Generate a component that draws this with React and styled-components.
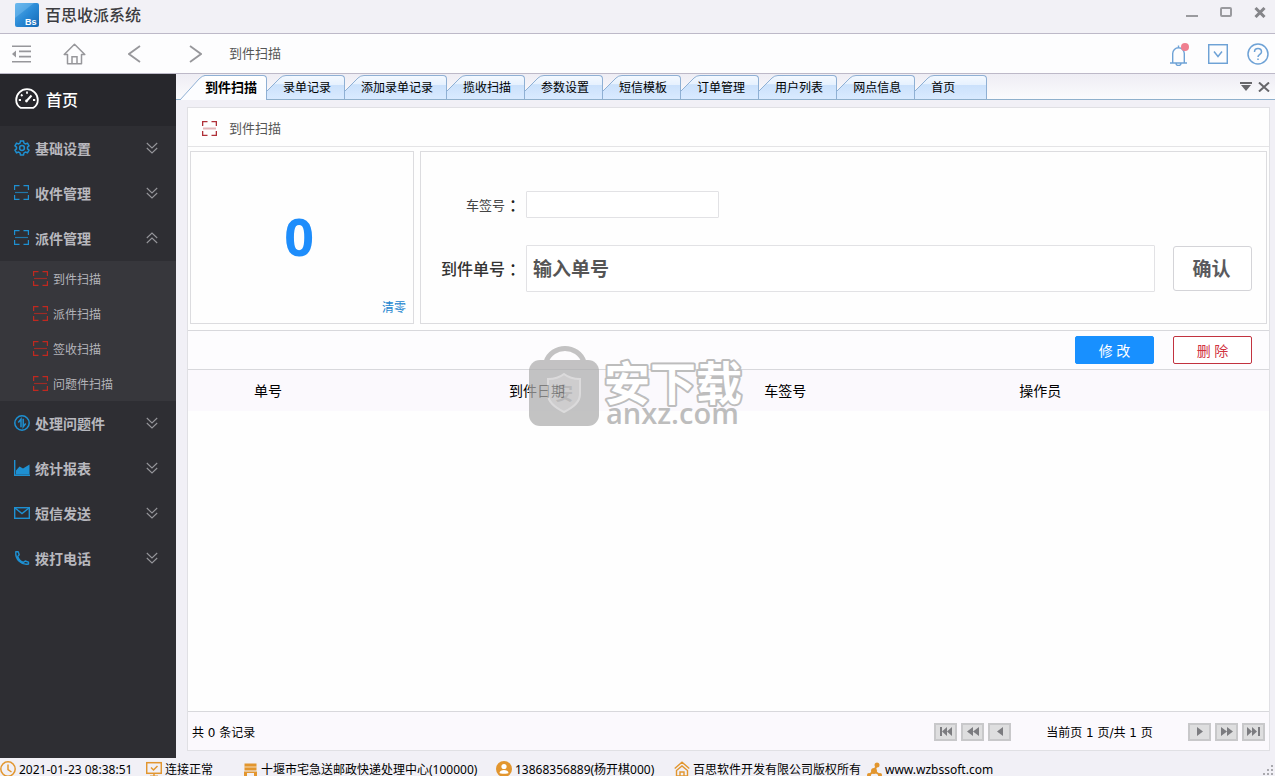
import React, { useState } from "react";
import styled, { createGlobalStyle, css } from "styled-components";

const GlobalStyle = createGlobalStyle`
  * {
    box-sizing: border-box;
  }
  body {
    margin: 0;
    font-family: "Noto Sans", "Noto Sans CJK SC", sans-serif;
    font-size: 12px;
    color: #000;
  }
  button, input {
    font-family: inherit;
    margin: 0;
  }
  button {
    padding: 0;
    border: none;
    background: none;
    cursor: pointer;
  }
  svg {
    display: block;
    flex: none;
  }
`;

const Window = styled.div`
  display: grid;
  grid-template-rows: 34px 40px 1fr 18px;
  height: 100vh;
  min-height: 600px;
  background: #f1f0f6;
`;

const TitleBar = styled.header`
  display: flex;
  align-items: center;
  gap: 6px;
  padding: 0 7px 4px 15px;
  border-bottom: 1px solid #bdb9c8;
  background: #f2f1f6;
`;

const AppName = styled.h1`
  flex: 1;
  margin: 0;
  font-size: 16px;
  line-height: 24px;
  font-weight: 500;
  color: #3c3c40;
`;

const WindowButton = styled.button`
  display: flex;
  justify-content: center;
  width: 16px;
  margin-left: 12px;
  padding-bottom: 4px;
`;

const Toolbar = styled.nav`
  display: flex;
  align-items: center;
  justify-content: space-between;
  padding: 0 6px 0 11px;
  border-bottom: 1px solid #bdb9c8;
  background: #fdfdfe;
`;

const ToolGroup = styled.div`
  display: flex;
  align-items: center;
  gap: ${(p) => p.$gap}px;
`;

const ToolTitle = styled.span`
  margin-left: -15px;
  padding-bottom: 2px;
  font-size: 13px;
  line-height: 18px;
  color: #555;
`;

const Body = styled.div`
  display: grid;
  grid-template-columns: 176px 1fr;
  min-height: 0;
`;

const Sidebar = styled.aside`
  background: #2e2e33;
  overflow: hidden;
`;

const HomeButton = styled.button`
  display: flex;
  align-items: center;
  gap: 7px;
  width: 100%;
  height: 52px;
  padding: 0 0 2px 15px;
  background: #27272c;
  color: #fff;
  font-size: 16px;
  font-weight: 500;
`;

const MenuButton = styled.button`
  display: flex;
  align-items: center;
  gap: 5px;
  width: 100%;
  height: 45px;
  padding: 0 18px 2px 14px;
  color: #b8b8be;
  font-size: 14px;
  font-weight: 700;
  text-align: left;

  span {
    flex: 1;
  }
`;

const MenuIcon = styled.i`
  display: flex;
  width: 16px;
`;

const SubMenu = styled.div`
  background: #37373c;
`;

const SubButton = styled.button`
  display: flex;
  align-items: center;
  gap: 5px;
  width: 100%;
  height: 35px;
  padding-left: 33px;
  color: #b4b4ba;
  font-size: 12px;
`;

const Main = styled.main`
  display: flex;
  flex-direction: column;
  min-width: 0;
`;

const TabStrip = styled.div`
  display: flex;
  height: 26px;
  padding: 1px 5px 0 4px;
  border-bottom: 1px solid #8fb0cc;
  background: linear-gradient(#eeedf4, #fbfbfd);
`;

const TabButton = styled.button`
  position: relative;
  height: ${(p) => (p.$active ? 25 : 24)}px;
  padding: 1px ${(p) => (p.$last ? 32 : 14)}px 0 16px;
  font-size: 12px;
  line-height: 24px;
  white-space: nowrap;
  color: #000;

  svg {
    position: absolute;
    left: 0;
    top: 0;
  }

  span {
    position: relative;
  }

  &::before {
    content: "";
    position: absolute;
    left: 24px;
    right: 0;
    top: 0;
    bottom: 0;
    border: 1px solid #8fb0d4;
    border-width: 1px 1px 0 0;
    border-radius: 0 4px 0 0;
    background: linear-gradient(#f4f9ff 0%, #e6f1fe 38%, #cbe1fb 40%, #d9eaff 100%);
  }

  ${(p) =>
    p.$active &&
    css`
      padding: 0 10px 1px 25px;
      font-size: 13px;
      font-weight: 700;

      &::before {
        background: linear-gradient(#fff, #f8fbff);
      }
    `}
`;

const TabTools = styled.div`
  display: flex;
  align-items: center;
  gap: 6px;
  margin-left: auto;
`;

const Panel = styled.section`
  flex: 1;
  display: flex;
  flex-direction: column;
  min-height: 0;
  margin: 7px 5px 7px 11px;
  border: 1px solid #e0e0e4;
  background: #fefefe;
`;

const PanelHeader = styled.div`
  display: flex;
  align-items: center;
  gap: 12px;
  height: 39px;
  padding: 2px 14px 0;
  border-bottom: 1px solid #e4e4e6;

  h2 {
    margin: 0;
    font-size: 13px;
    line-height: 18px;
    font-weight: 400;
    color: #555;
  }
`;

const Cards = styled.div`
  display: grid;
  grid-template-columns: 224px 1fr;
  gap: 6px;
  height: 183px;
  padding: 4px 2px 6px;
`;

const Counter = styled.div`
  display: grid;
  grid-template-rows: 1fr 32px;
  padding-top: 28px;
  border: 1px solid #dcdcdf;
`;

const Count = styled.output`
  display: flex;
  align-items: center;
  justify-content: center;
  padding-right: 6px;
  font-family: "Open Sans", sans-serif;
  font-size: 52px;
  line-height: 60px;
  font-weight: 700;
  color: #1e8dfb;
`;

const ClearButton = styled.button`
  justify-self: end;
  padding-right: 7px;
  font-size: 12px;
  color: #1c86cf;
`;

const Form = styled.form`
  display: grid;
  grid-template-columns: 82px 1fr 79px;
  grid-template-rows: 27px 47px;
  gap: 27px 0;
  align-content: start;
  align-items: center;
  padding: 39px 14px 0 19px;
  border: 1px solid #dcdcdf;
`;

const Label = styled.label`
  display: flex;
  align-items: center;
  justify-content: flex-end;
  padding-right: 1px;
  white-space: nowrap;
  line-height: 24px;
  font-size: ${(p) => (p.$large ? 16 : 13)}px;
  font-weight: ${(p) => (p.$large ? 500 : 400)};
  color: ${(p) => (p.$large ? "#333" : "#444")};
`;

const Colon = styled.span`
  font-family: "Noto Sans CJK TC", sans-serif;
  font-size: 16px;
  font-weight: 500;
  color: #222;
`;

const Field = styled.div`
  padding: 0 18px 0 4px;
  height: 100%;
`;

const TextInput = styled.input`
  width: ${(p) => (p.$large ? "100%" : "193px")};
  height: 100%;
  padding: 0 6px;
  border: 1px solid #e2e2e5;
  border-radius: 1px;
  background: #fff;
  outline: none;
  font-size: ${(p) => (p.$large ? 19 : 13)}px;
  font-weight: ${(p) => (p.$large ? 700 : 400)};
  color: #555;

  &::placeholder {
    color: #555;
    opacity: 1;
  }
`;

const ConfirmButton = styled.button`
  height: 45px;
  padding: 0 2px 2px 0;
  border: 1px solid #d4d4d8;
  border-radius: 3px;
  background: #fff;
  font-size: 19px;
  font-weight: 700;
  color: #5a5a5e;
`;

const Records = styled.div`
  position: relative;
  flex: 1;
  display: flex;
  flex-direction: column;
  border-top: 1px solid #d8d8dc;
`;

const Actions = styled.div`
  display: flex;
  align-items: center;
  justify-content: flex-end;
  gap: 19px;
  height: 39px;
  padding-right: 17px;
  border-bottom: 1px solid #d8d8dc;
  background: #fdfcfe;
`;

const ActionButton = styled.button`
  width: 79px;
  height: 28px;
  border: 1px solid ${(p) => (p.$danger ? "#c2323f" : "#1890ff")};
  border-radius: 2px;
  background: ${(p) => (p.$danger ? "#fff" : "#1890ff")};
  color: ${(p) => (p.$danger ? "#d0323f" : "#fff")};
  font-size: 14px;
`;

const Table = styled.table`
  width: 100%;
  table-layout: fixed;
  border-collapse: collapse;

  th {
    height: 41px;
    padding: 0 0 1px;
    background: #fbf9fd;
    font-size: 14px;
    font-weight: 400;
    text-align: left;
  }
  th:first-child {
    width: 29.7%;
    padding-left: 66px;
  }
  th:nth-child(2), th:nth-child(3) {
    width: 23.6%;
  }
`;

const Pager = styled.footer`
  display: flex;
  align-items: center;
  gap: 4px;
  height: 39px;
  margin-top: auto;
  padding: 1px 4px 0;
  border-top: 1px solid #d8d8dc;
  background: #fbf9fd;
  font-family: "DejaVu Sans", "Noto Sans CJK SC", sans-serif;
  font-size: 12px;
`;

const Total = styled.span`
  margin-right: auto;
`;

const PageInfo = styled.span`
  width: 169px;
  text-align: center;
`;

const PageButton = styled.button`
  display: flex;
  align-items: center;
  justify-content: center;
  width: 23px;
  height: 18px;
  border: 2px solid #c8c8ca;
  background: #dededf;
`;

const Watermark = styled.svg`
  position: absolute;
  left: 339px;
  top: 12px;
  overflow: visible;
  pointer-events: none;
`;

const StatusBar = styled.footer`
  position: relative;
  display: flex;
  padding-top: 3px;
  overflow: hidden;
  background: #f1f0f6;
`;

const StatusItem = styled.div`
  flex: none;
  display: flex;
  align-items: center;
  gap: 3px;
  width: ${(p) => p.$width}px;
  height: 16px;
  line-height: 15px;
  white-space: nowrap;
`;

const Grip = styled.svg`
  position: absolute;
  right: 0;
  bottom: 0;
`;

/* ---------- icons ---------- */

const Svg = ({ w = 16, h = w, box, color, sw = 1, children }) => (
  <svg
    width={w}
    height={h}
    viewBox={box || `0 0 ${w} ${h}`}
    fill="none"
    stroke={color}
    strokeWidth={sw}
    aria-hidden="true"
  >
    {children}
  </svg>
);

const LogoIcon = () => (
  <svg width="24" height="24" viewBox="0 0 24 24" aria-hidden="true">
    <defs>
      <linearGradient id="logo" x1="0" y1="0" x2="1" y2="1">
        <stop offset="0" stopColor="#5cb0ea" />
        <stop offset="0.5" stopColor="#2a8ad6" />
        <stop offset="1" stopColor="#1568b4" />
      </linearGradient>
    </defs>
    <rect width="24" height="24" rx="2" fill="url(#logo)" />
    <path d="M0 2Q0 0 2 0H19L0 15Z" fill="#8cccf5" opacity="0.35" />
    <text x="10" y="22" fontFamily="Liberation Sans, sans-serif" fontSize="9" fontWeight="700" fill="#fff">
      Bs
    </text>
  </svg>
);

const ScanIcon = ({ color, soft }) => (
  <Svg w={15} color={color} sw={soft ? 1.400 : 1.200}>
    <path d="M.6 5V.6H5.500M9.500 .6h4.900v4.400M14.400 10v4.400H9.500M5.500 14.400H.6V10" />
    <path d="M1 7.500h13" strokeWidth={soft ? 2 : 1.200} opacity={soft ? 0.35 : 0.75} />
  </Svg>
);

const GearIcon = () => (
  <Svg w={16} color="#1e90d2" sw={1.500}>
    <path d="M6.500 1h3l.5 2.100 1.400.8 2.100-.7 1.500 2.600L13.500 7.200v1.600l1.500 1.400-1.500 2.600-2.100-.7-1.400.8-.5 2.100h-3L6 12.900l-1.400-.8-2.100.7L1 10.200l1.500-1.400V7.200L1 5.800l1.500-2.600 2.100.7L6 3.100Z" />
    <circle cx="8" cy="8" r="2.400" />
  </Svg>
);

const ExchangeIcon = () => (
  <Svg w={16} color="#1e90d2" sw={1.500}>
    <circle cx="8" cy="8" r="7.200" />
    <path d="M7 12.300V4.200L4.300 7.500M9.200 3.800v8l2.500-3.300" />
  </Svg>
);

const ChartIcon = () => (
  <Svg w={16} color="#1e90d2">
    <path d="M.7 0v15.300H16" strokeWidth="1.400" />
    <path d="M2 14.500V10.500L5.500 6.500 9 8.500 15.500 4.500V14.500Z" fill="#1e90d2" stroke="none" />
  </Svg>
);

const MailIcon = () => (
  <Svg w={16} h={12} color="#1e90d2" sw={1.400}>
    <rect x=".7" y=".7" width="14.600" height="10.600" />
    <path d="M1 1l7 5.500L15 1" />
  </Svg>
);

const PhoneIcon = () => (
  <Svg w={16} color="#1e90d2" sw={1.400}>
    <path d="M1.800 1.800h2.400l1 3-1.500 1.600c1 3 3 5 5.800 6l1.700-1.400 3.300 1.200v1.800C7.500 15.500 1 9.500 1.800 1.800Z" strokeLinejoin="round" />
    <path d="M3.200 7c1.200 3 3.300 5 6.300 6.200" strokeWidth="1.800" />
  </Svg>
);

const GaugeIcon = () => (
  <Svg w={24} h={22} color="#fff" sw={1.800}>
    <path d="M5.500 19.800C2.800 18 1.200 15.200 1.200 12A10.700 10.700 0 0 1 22.800 12c0 3.200-1.600 6-4.300 7.800Z" strokeLinejoin="round" />
    <path d="M12 12.500L16.500 7.500" strokeWidth="2" />
    <path d="M12 3.500v2.200M3.800 12H6M18 12h2.200M6 6.500l1.500 1.500M12 12.800h.1" />
    <circle cx="11.500" cy="13" r="1.400" fill="#fff" stroke="none" />
  </Svg>
);

const ChevronIcon = ({ up }) => (
  <Svg w={12} h={12} color="#96969b" sw={1.100}>
    <path d={up ? "M.8 6L6 1l5.200 5M.8 11L6 6l5.200 5" : "M.8 1L6 6l5.200-5M.8 6L6 11l5.200-5"} />
  </Svg>
);

const IndentIcon = () => (
  <Svg w={21} h={18} color="#97979b" sw={1.600}>
    <path d="M1 1.200h19M8 6.400h12M8 11.600h12M1 16.800h19" />
    <path d="M5 5.500v7L1 9Z" fill="#97979b" stroke="none" />
  </Svg>
);

const HouseIcon = () => (
  <Svg w={23} h={22} color="#97979b" sw={1.500}>
    <path d="M4.500 11.500H1.200L11.500 1.200l10.300 10.300h-3.300v9.300h-14Z" strokeLinejoin="round" />
    <path d="M9 20.800v-7h5v7" />
  </Svg>
);

const ArrowIcon = ({ right }) => (
  <Svg w={13} h={18} color="#97979b" sw={1.800}>
    <path d={right ? "M1 1l11 8L1 17" : "M12 1L1 9l11 8"} />
  </Svg>
);

const BellIcon = () => (
  <Svg w={20} h={24} color="#6ea2d6" sw={1.400}>
    <path d="M1 21h17M3.700 21v-9.500a5.800 5.800 0 0 1 11.600 0V21M9.500 3.500v2M7 21.300a2.500 2.200 0 0 0 5 0" />
    <circle cx="16" cy="5" r="4" fill="#ef7f8f" stroke="none" />
  </Svg>
);

const BoxIcon = () => (
  <Svg w={20} color="#6ea2d6" sw={1.500}>
    <rect x=".7" y=".7" width="18.600" height="18.600" />
    <path d="M6 7.500l4 5 4-5" />
  </Svg>
);

const HelpIcon = () => (
  <Svg w={22} color="#6ea2d6" sw={1.500}>
    <circle cx="11" cy="11" r="10" />
    <path d="M7.500 9c0-4.600 7-4.600 7 0 0 2.300-3.500 2.300-3.500 5M11 15.500v1.500" />
  </Svg>
);

const pageShapes = {
  first: "M2 1h2v9H2zM9 1v9L4 5.500zM14 1v9L9 5.500z",
  rewind: "M8 1v9L2 5.500zM14 1v9L8 5.500z",
  prev: "M11 1v9L5 5.500z",
  next: "M5 1v9l6-4.500z",
  forward: "M2 1v9l6-4.500zM8 1v9l6-4.500z",
  last: "M1 1v9l5-4.500zM6 1v9l5-4.500zM12 1h2v9h-2z",
};

const TabEdge = ({ active }) => (
  <svg width="25" height="25" viewBox="0 0 25 25" aria-hidden="true">
    <defs>
      <linearGradient id="tabFill" gradientUnits="userSpaceOnUse" x1="0" y1="0" x2="0" y2="24">
        <stop offset="0" stopColor="#f4f9ff" />
        <stop offset="0.380" stopColor="#e6f1fe" />
        <stop offset="0.400" stopColor="#cbe1fb" />
        <stop offset="1" stopColor="#d9eaff" />
      </linearGradient>
    </defs>
    {active ? (
      <>
        <path d="M0 25L19 4Q22.500.5 25 .5V25Z" fill="#fcfdff" />
        <path d="M0 25L19 4Q22.500.5 25 .5" fill="none" stroke="#8fb0d4" />
      </>
    ) : (
      <>
        <path d="M0 24V16L13 3Q15.500.5 19 .5H25V24Z" fill="url(#tabFill)" />
        <path d="M0 16L13 3Q15.500.5 19 .5H25" fill="none" stroke="#8fb0d4" />
      </>
    )}
  </svg>
);

const ORANGE = "#e2962f";

const ClockIcon = () => (
  <Svg w={16} color={ORANGE} sw={1.500}>
    <circle cx="8" cy="8" r="7.200" />
    <path d="M8 3.500V8.500l3.500 2.500" />
  </Svg>
);

const MonitorIcon = () => (
  <Svg w={16} color={ORANGE} sw={1.500}>
    <rect x=".7" y="1.700" width="14.600" height="10.600" />
    <path d="M5 6.500l2.500 2.500 4-4M4 15.300h8M8 12v3" />
  </Svg>
);

const StoreIcon = () => (
  <Svg w={15} color="none">
    <path d="M1.500 1.500h12v7H1.500zM1 9.500h13V14h-3v-3H4v3H1z" fill={ORANGE} />
    <path d="M1 5h13" stroke="#f6dcb8" />
  </Svg>
);

const UserIcon = () => (
  <Svg w={16} color="none">
    <circle cx="8" cy="8" r="8" fill={ORANGE} />
    <circle cx="8" cy="5.500" r="2.600" fill="#fff" />
    <path d="M3.500 12c0-4 9-4 9 0 0 1-9 1-9 0Z" fill="#fff" />
  </Svg>
);

const OfficeIcon = () => (
  <Svg w={16} color={ORANGE} sw={1.400}>
    <path d="M.7 7.500L8 1.200l7.300 6.300M2.500 9.500L8 5l5.500 4.500V15h-11Z" />
    <path d="M6 15v-4h4v4" />
  </Svg>
);

const LinkIcon = () => (
  <Svg w={15} color={ORANGE} sw={2}>
    <circle cx="10" cy="3" r="2.500" fill={ORANGE} stroke="none" />
    <circle cx="7" cy="9" r="3" fill={ORANGE} stroke="none" />
    <circle cx="2" cy="13" r="2" fill={ORANGE} stroke="none" />
    <circle cx="13" cy="13" r="2" fill={ORANGE} stroke="none" />
    <path d="M10 3L7 9l-5 4M7 9l6 4" />
  </Svg>
);

/* ---------- data ---------- */

const blueScan = <ScanIcon color="#1e90d2" />;

const menu = [
  { name: "基础设置", icon: <GearIcon /> },
  { name: "收件管理", icon: blueScan },
  {
    name: "派件管理",
    icon: blueScan,
    children: ["到件扫描", "派件扫描", "签收扫描", "问题件扫描"],
  },
  { name: "处理问题件", icon: <ExchangeIcon /> },
  { name: "统计报表", icon: <ChartIcon /> },
  { name: "短信发送", icon: <MailIcon /> },
  { name: "拨打电话", icon: <PhoneIcon /> },
];

const tabs = [
  "到件扫描",
  "录单记录",
  "添加录单记录",
  "揽收扫描",
  "参数设置",
  "短信模板",
  "订单管理",
  "用户列表",
  "网点信息",
  "首页",
];

const status = [
  { icon: <ClockIcon />, text: "2021-01-23 08:38:51", width: 146 },
  { icon: <MonitorIcon />, text: "连接正常", width: 97 },
  { icon: <StoreIcon />, text: "十堰市宅急送邮政快递处理中心(100000)", width: 253 },
  { icon: <UserIcon />, text: "13868356889(杨开棋000)", width: 178 },
  { icon: <OfficeIcon />, text: "百思软件开发有限公司版权所有", width: 193 },
  { icon: <LinkIcon />, text: "www.wzbssoft.com", width: 140 },
];

const PageNav = ({ kind, label }) => (
  <PageButton type="button" aria-label={label}>
    <svg width="16" height="11" viewBox="0 0 16 11" aria-hidden="true">
      <path d={pageShapes[kind]} fill="#7c7c80" />
    </svg>
  </PageButton>
);

const App = () => {
  const [active, setActive] = useState("到件扫描");
  const [open, setOpen] = useState("派件管理");

  return (
    <>
      <GlobalStyle />
      <Window>
        <TitleBar>
          <LogoIcon />
          <AppName>百思收派系统</AppName>
          <WindowButton aria-label="最小化">
            <Svg w={12} h={11} color="#9a9a9e" sw={2}>
              <path d="M0 9h12" />
            </Svg>
          </WindowButton>
          <WindowButton aria-label="最大化">
            <Svg w={12} h={11} color="#9a9a9e" sw={2}>
              <rect x="1" y="1" width="10" height="8" rx="1" />
            </Svg>
          </WindowButton>
          <WindowButton aria-label="关闭">
            <Svg w={12} h={11} color="#858589" sw={3}>
              <path d="M1.500 1l9 9M10.500 1l-9 9" />
            </Svg>
          </WindowButton>
        </TitleBar>

        <Toolbar>
          <ToolGroup $gap={42}>
            <ToolGroup $gap={31}>
              <button aria-label="收起菜单">
                <IndentIcon />
              </button>
              <button aria-label="首页">
                <HouseIcon />
              </button>
            </ToolGroup>
            <ToolGroup $gap={48}>
              <button aria-label="后退">
                <ArrowIcon />
              </button>
              <button aria-label="前进">
                <ArrowIcon right />
              </button>
            </ToolGroup>
            <ToolTitle>到件扫描</ToolTitle>
          </ToolGroup>
          <ToolGroup $gap={19}>
            <button aria-label="通知">
              <BellIcon />
            </button>
            <button aria-label="更多">
              <BoxIcon />
            </button>
            <button aria-label="帮助">
              <HelpIcon />
            </button>
          </ToolGroup>
        </Toolbar>

        <Body>
          <Sidebar>
            <HomeButton>
              <GaugeIcon />
              首页
            </HomeButton>
            {menu.map((item) => (
              <div key={item.name}>
                <MenuButton onClick={() => setOpen(open === item.name ? "" : item.name)}>
                  <MenuIcon>{item.icon}</MenuIcon>
                  <span>{item.name}</span>
                  <ChevronIcon up={open === item.name} />
                </MenuButton>
                {item.children && open === item.name && (
                  <SubMenu>
                    {item.children.map((name) => (
                      <SubButton key={name}>
                        <ScanIcon color="#c0281f" />
                        {name}
                      </SubButton>
                    ))}
                  </SubMenu>
                )}
              </div>
            ))}
          </Sidebar>

          <Main>
            <TabStrip>
              {tabs.map((name, i) => (
                <TabButton
                  key={name}
                  $active={name === active}
                  $last={i === tabs.length - 1}
                  onClick={() => setActive(name)}
                >
                  <TabEdge active={name === active} />
                  <span>{name}</span>
                </TabButton>
              ))}
              <TabTools>
                <button aria-label="标签列表">
                  <Svg w={12} h={10} color="none">
                    <path d="M0 0h12v2H0zM1 3h10L6 9z" fill="#66666a" />
                  </Svg>
                </button>
                <button aria-label="关闭标签">
                  <Svg w={12} h={10} color="#66666a" sw={2}>
                    <path d="M1 .5l10 9M11 .5l-10 9" />
                  </Svg>
                </button>
              </TabTools>
            </TabStrip>

            <Panel>
              <PanelHeader>
                <ScanIcon color="#b03038" soft />
                <h2>到件扫描</h2>
              </PanelHeader>

              <Cards>
                <Counter>
                  <Count>0</Count>
                  <ClearButton>清零</ClearButton>
                </Counter>
                <Form onSubmit={(e) => e.preventDefault()}>
                  <Label htmlFor="car">
                    车签号<Colon>：</Colon>
                  </Label>
                  <Field>
                    <TextInput id="car" />
                  </Field>
                  <span />
                  <Label htmlFor="bill" $large>
                    到件单号<Colon>：</Colon>
                  </Label>
                  <Field>
                    <TextInput id="bill" $large placeholder="输入单号" />
                  </Field>
                  <ConfirmButton>确认</ConfirmButton>
                </Form>
              </Cards>

              <Records>
                <Actions>
                  <ActionButton>修 改</ActionButton>
                  <ActionButton $danger>删 除</ActionButton>
                </Actions>
                <Table>
                  <thead>
                    <tr>
                      <th>单号</th>
                      <th>到件日期</th>
                      <th>车签号</th>
                      <th>操作员</th>
                    </tr>
                  </thead>
                </Table>
                <Watermark width="220" height="100" viewBox="0 0 220 100" aria-hidden="true">
                  <g opacity="0.72">
                    <path d="M19 19C25 1 51 1 57 19" fill="none" stroke="#adadad" strokeWidth="5" />
                    <rect x="2" y="17" width="70" height="66" rx="11" fill="#adadad" />
                    <path d="M37 31c5 4 10 5 16 5v15c0 8-6 13-16 18-10-5-16-10-16-18V36c6 0 11-1 16-5Z" fill="#bdbdbd" stroke="#cfcfcf" strokeWidth="2" />
                    <text x="28" y="57" fontFamily="Noto Sans CJK SC, sans-serif" fontSize="18" fontWeight="700" fill="#a0a0a0">
                      安
                    </text>
                  </g>
                  <text
                    x="77"
                    y="57"
                    fontFamily="Noto Sans CJK SC, sans-serif"
                    fontSize="46"
                    fontWeight="700"
                    fill="#fff"
                    stroke="#bdbdbd"
                    strokeWidth="4"
                    strokeLinejoin="round"
                    paintOrder="stroke"
                  >
                    安下载
                  </text>
                  <text x="79" y="81" fontFamily="Open Sans, sans-serif" fontSize="29" fontWeight="600" fill="#bdbdbd">
                    anxz.com
                  </text>
                </Watermark>
                <Pager>
                  <Total>共 0 条记录</Total>
                  <PageNav kind="first" label="第一页" />
                  <PageNav kind="rewind" label="快退" />
                  <PageNav kind="prev" label="上一页" />
                  <PageInfo>当前页 1 页/共 1 页</PageInfo>
                  <PageNav kind="next" label="下一页" />
                  <PageNav kind="forward" label="快进" />
                  <PageNav kind="last" label="最后一页" />
                </Pager>
              </Records>
            </Panel>
          </Main>
        </Body>

        <StatusBar>
          {status.map((item) => (
            <StatusItem key={item.text} $width={item.width}>
              {item.icon}
              {item.text}
            </StatusItem>
          ))}
          <Grip width="12" height="12" viewBox="0 0 12 12" aria-hidden="true">
            <path d="M8 1h2v2H8zM4 5h2v2H4zM8 5h2v2H8zM0 9h2v2H0zM4 9h2v2H4zM8 9h2v2H8z" fill="#a9a9ae" />
          </Grip>
        </StatusBar>
      </Window>
    </>
  );
};

export default App;
